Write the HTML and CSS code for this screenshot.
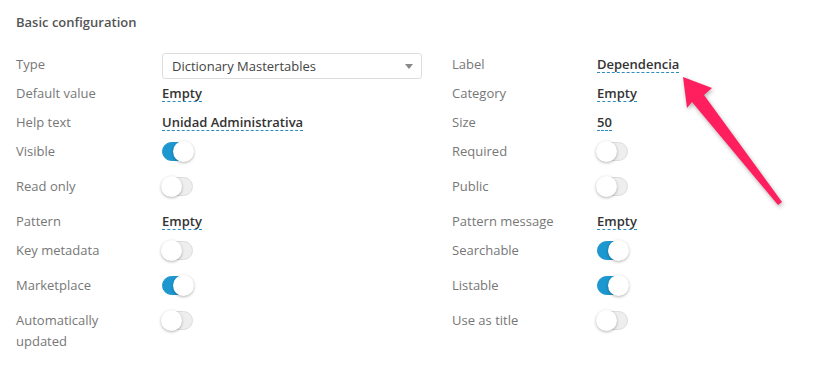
FILE: index.html
```html
<!DOCTYPE html>
<html lang="en">
<head>
    <meta charset="UTF-8">
    <meta name="viewport" content="width=device-width, initial-scale=1.0">
    <title>Basic configuration</title>
    <link rel="stylesheet" href="styles.css">
</head>
<body>

<div class="panel">
    <h3>Basic configuration</h3>

    <div class="grid">
        <div class="label">Type</div>
        <div class="cell text">
            <div class="select">Dictionary Mastertables <span class="caret"></span></div>
        </div>
        <div class="label">Label</div>
        <div class="cell text"><span class="value">Dependencia</span></div>

        <div class="label">Default value</div>
        <div class="cell text"><span class="value">Empty</span></div>
        <div class="label">Category</div>
        <div class="cell text"><span class="value">Empty</span></div>

        <div class="label">Help text</div>
        <div class="cell text"><span class="value">Unidad Administrativa</span></div>
        <div class="label">Size</div>
        <div class="cell text"><span class="value">50</span></div>

        <div class="label">Visible</div>
        <div class="cell switch-cell"><span class="switch on"></span></div>
        <div class="label">Required</div>
        <div class="cell switch-cell"><span class="switch"></span></div>

        <div class="label">Read only</div>
        <div class="cell switch-cell"><span class="switch"></span></div>
        <div class="label">Public</div>
        <div class="cell switch-cell"><span class="switch"></span></div>

        <div class="label">Pattern</div>
        <div class="cell text"><span class="value">Empty</span></div>
        <div class="label">Pattern message</div>
        <div class="cell text"><span class="value">Empty</span></div>

        <div class="label">Key metadata</div>
        <div class="cell switch-cell"><span class="switch"></span></div>
        <div class="label">Searchable</div>
        <div class="cell switch-cell"><span class="switch on"></span></div>

        <div class="label">Marketplace</div>
        <div class="cell switch-cell"><span class="switch on"></span></div>
        <div class="label">Listable</div>
        <div class="cell switch-cell"><span class="switch on"></span></div>

        <div class="label">Automatically updated</div>
        <div class="cell switch-cell"><span class="switch"></span></div>
        <div class="label">Use as title</div>
        <div class="cell switch-cell"><span class="switch"></span></div>
    </div>

    <!-- callout arrow pointing at the label value -->
    <svg class="arrow" width="120" height="150" viewBox="670 70 120 150">
        <polygon points="683,77 712,88 704,95 782,202 778,205 692,102 687,108" fill="#ff1f5e"/>
    </svg>
</div>

</body>
</html>
```

FILE: styles.css
```css
body {
    margin: 0;
    background: #fff;
    font-family: "Open Sans", Arial, sans-serif;
    font-size: 13px;
    color: #333;
}
.panel {
    position: relative;
    padding: 12px 16px;
}
h3 {
    margin: 0 0 21px;
    font-size: 13px;
    line-height: 21px;
    font-weight: 600;
    color: #555;
}
.grid {
    display: grid;
    grid-template-columns: 146px 290px 145px 1fr;
    align-items: start;
}
.label {
    line-height: 21px;
    color: #777;
    padding-right: 26px;
}
.cell.text { height: 29px; }
.cell.switch-cell { height: 35px; }
.value {
    display: inline-block;
    margin-top: 2px;
    line-height: 16px;
    font-weight: 600;
    color: #333;
    border-bottom: 1px dashed #2a8cbf;
}
.select {
    position: relative;
    box-sizing: border-box;
    width: 260px;
    height: 26px;
    margin-top: -1px;
    padding: 0 9px;
    line-height: 24px;
    border: 1px solid #ddd;
    border-radius: 3px;
    color: #444;
}
.caret {
    position: absolute;
    right: 8px;
    top: 10px;
    border-left: 4px solid transparent;
    border-right: 4px solid transparent;
    border-top: 5px solid #888;
}
.switch {
    position: relative;
    display: inline-block;
    box-sizing: border-box;
    width: 31px;
    height: 19px;
    margin-top: 1px;
    border-radius: 10px;
    background: #eee;
    border: 1px solid #ddd;
}
.switch::after {
    content: "";
    position: absolute;
    top: -2px;
    left: -2px;
    width: 21px;
    height: 21px;
    border-radius: 50%;
    background: #fff;
    box-shadow: 0 1px 3px rgba(0, 0, 0, 0.3);
}
.switch.on {
    background: #1d97cf;
    border-color: #1d97cf;
}
.switch.on::after {
    left: auto;
    right: -2px;
}
.arrow {
    position: absolute;
    left: 670px;
    top: 70px;
    filter: drop-shadow(1px 2px 2px rgba(0, 0, 0, 0.3));
}
```
